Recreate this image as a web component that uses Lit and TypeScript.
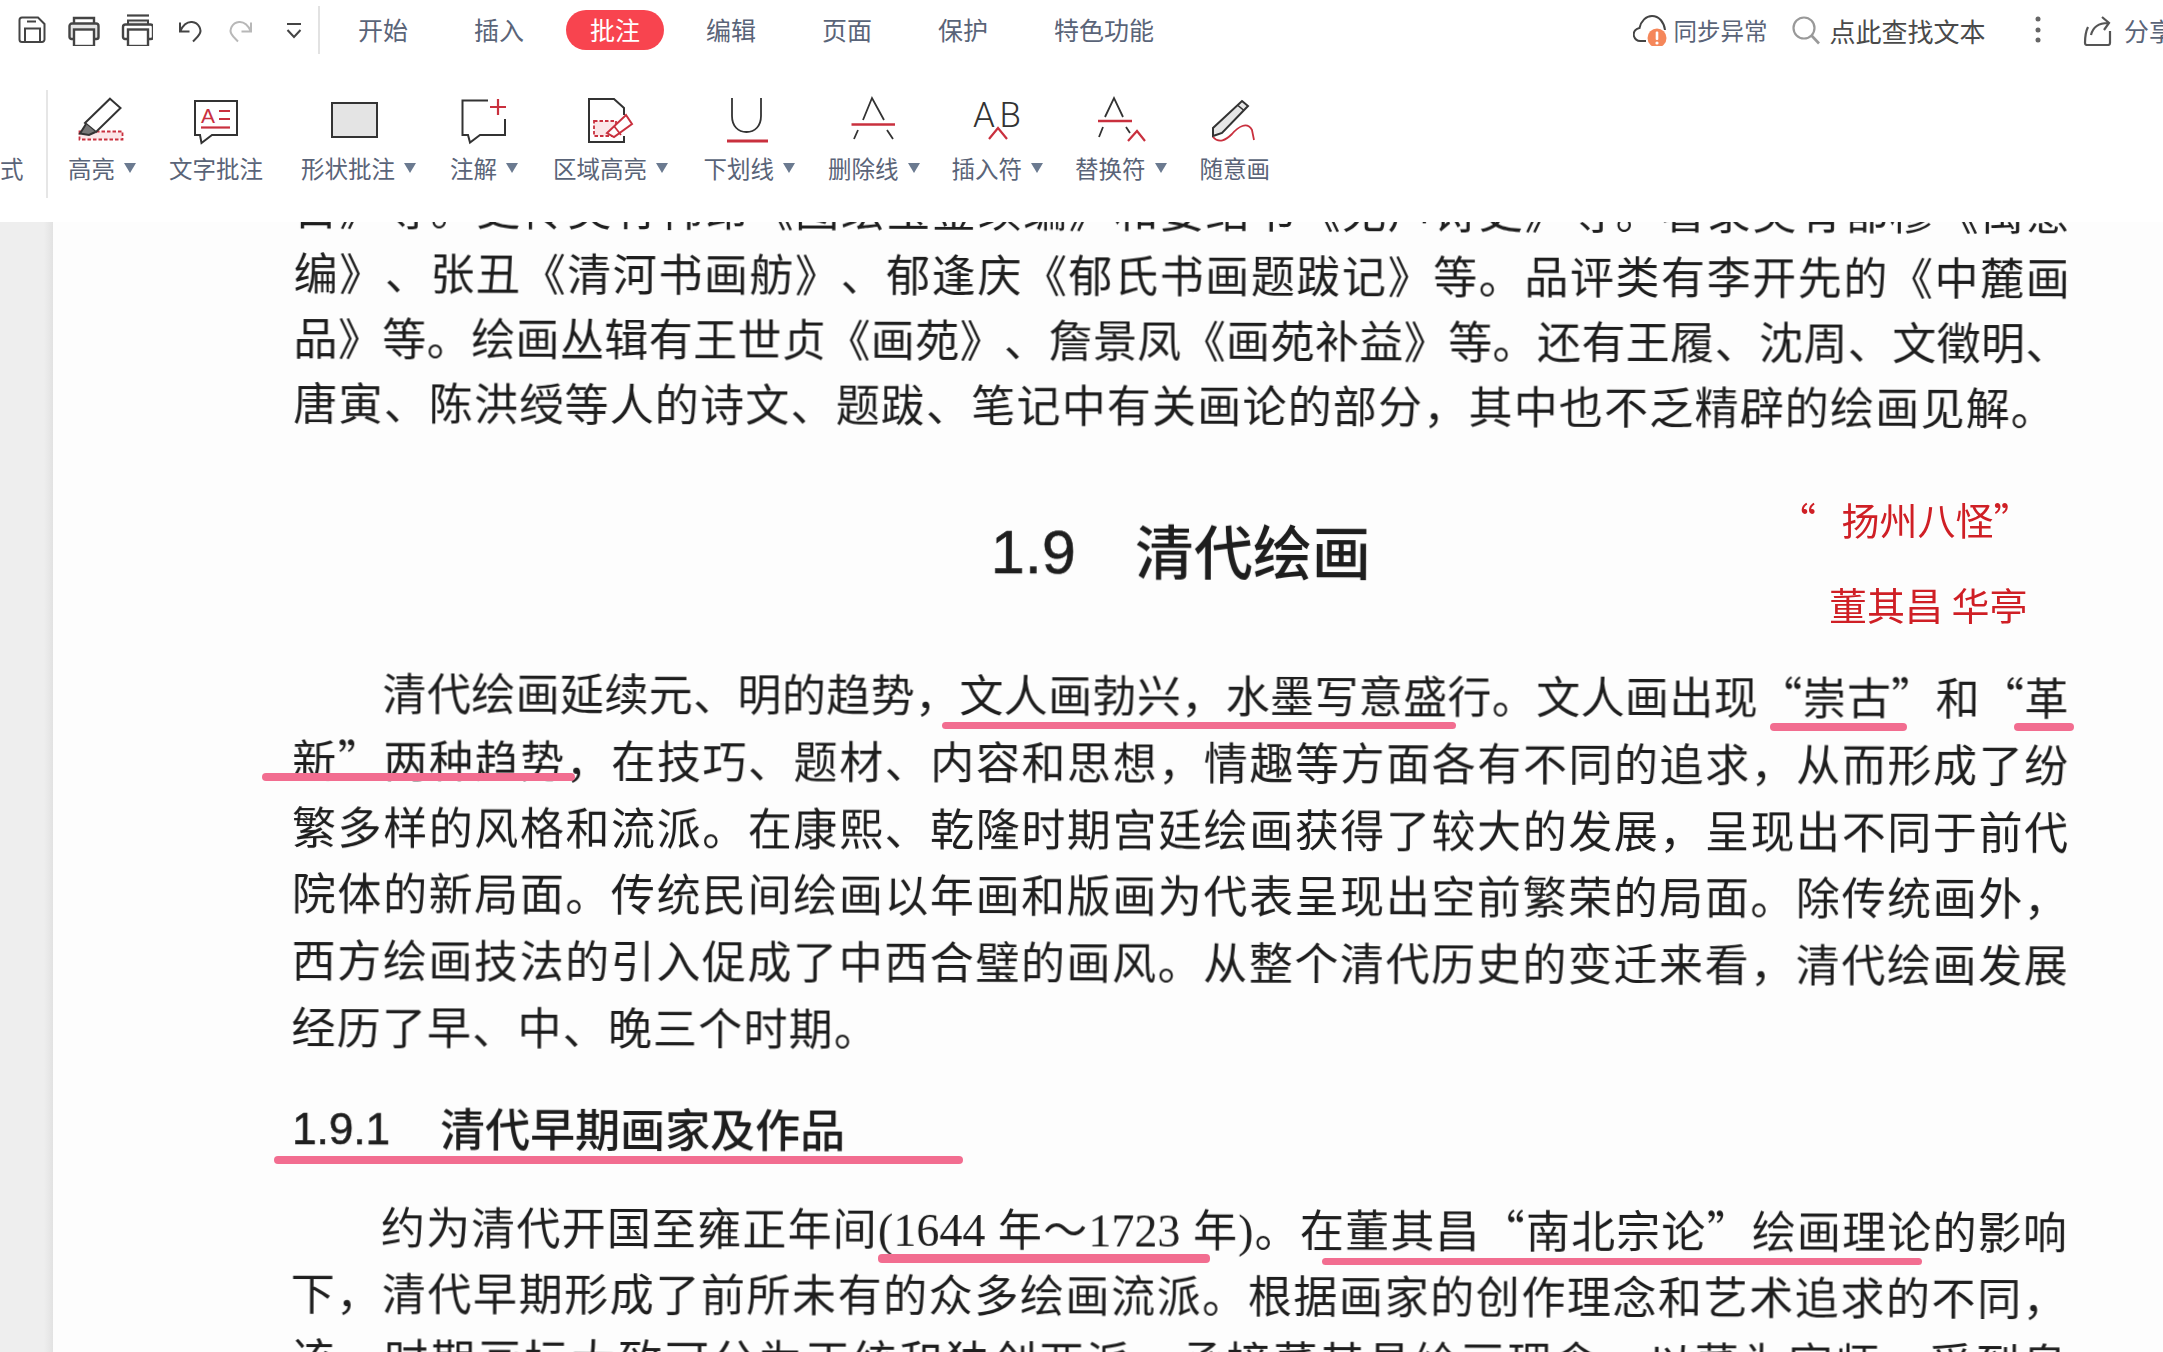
import { LitElement, html, css, svg } from "lit";
import { customElement } from "lit/decorators.js";

const D = "#444";
const R = "#c9303e";

const topIcons = [
  svg`<path d="M6 3.5H22L28.5 10V25.5a2.5 2.5 0 0 1-2.5 2.5H6a2.5 2.5 0 0 1-2.5-2.5V6A2.5 2.5 0 0 1 6 3.5Z" fill="none" stroke="${D}" stroke-width="2"/><path d="M9 28V14.5H24V28M11 7.5H20" fill="none" stroke="${D}" stroke-width="2"/>`,
  svg`<path d="M6 9.5V4H26V9.5" fill="none" stroke="${D}" stroke-width="2.4"/><path d="M6 25H3.5a2 2 0 0 1-2-2V12a2.5 2.5 0 0 1 2.5-2.5H28a2.5 2.5 0 0 1 2.5 2.5V23a2 2 0 0 1-2 2H26" fill="#e4e4e4" stroke="${D}" stroke-width="2.4"/><rect x="6" y="15.5" width="20" height="16.5" fill="#fff" stroke="${D}" stroke-width="2.4"/>`,
  svg`<path d="M6 1.5H28" stroke="${D}" stroke-width="2.2"/><path d="M7 11V6.5H27V11" fill="#e4e4e4" stroke="${D}" stroke-width="2"/><path d="M7 25H4a2 2 0 0 1-2-2V13a2.5 2.5 0 0 1 2.5-2.5H29.5a2.5 2.5 0 0 1 2.5 2.5V23a2 2 0 0 1-2 2H27" fill="none" stroke="${D}" stroke-width="2.4"/><rect x="7" y="15.5" width="20" height="16.5" fill="#fff" stroke="${D}" stroke-width="2.4"/>`,
  svg`<path d="M7 8.5V17.5H16.5M7 17.5C10 11 14 7.5 19 8C26 8.7 29 16 26.5 20C25 23 22 25.5 20 27.5" fill="none" stroke="${D}" stroke-width="2"/>`,
  svg`<path d="M25 8.5V17.5H15.5M25 17.5C22 11 18 7.5 13 8C6 8.7 3 16 5.5 20C7 23 10 25.5 12 27.5" fill="none" stroke="#b8b8b8" stroke-width="2"/>`,
  svg`<path d="M9 10H23" stroke="${D}" stroke-width="2"/><path d="M9.5 16L16 23L22.5 16" fill="none" stroke="${D}" stroke-width="2"/>`,
];

const tabs = ["开始", "插入", "批注", "编辑", "页面", "保护", "特色功能"];

const strokeA = (p: string) =>
  svg`<path d="${p}" fill="none" stroke="#333" stroke-width="1.8"/>`;

const tools = [
  {
    label: "高亮",
    drop: true,
    ml: 0,
    icon: svg`<rect x="1.5" y="35.5" width="43" height="8" fill="#fbe6e8" stroke="${R}" stroke-width="1.8" stroke-dasharray="3.5 2"/><path d="M32 2.7L42.5 12L18 36L7 27Z" fill="#fff" stroke="#333" stroke-width="2"/><path d="M8 28L2 37.5L11 39L17.5 36" fill="#777" stroke="#333" stroke-width="2"/>`,
  },
  {
    label: "文字批注",
    drop: false,
    ml: 0,
    icon: svg`<path d="M3 5H45V39H20L9.5 47L8 39H3Z" fill="#fff" stroke="#333" stroke-width="2"/><text x="9" y="27" class="glyph" fill="${R}" font-size="21">A</text><path d="M27 15H38M27 23H38" stroke="${R}" stroke-width="2"/><path d="M9 31.5H38" stroke="${R}" stroke-width="2.2"/>`,
  },
  {
    label: "形状批注",
    drop: true,
    ml: 5,
    icon: svg`<rect x="-3" y="7" width="45" height="34" fill="#e4e4e4" stroke="#333" stroke-width="2"/>`,
  },
  {
    label: "注解",
    drop: true,
    ml: 1,
    icon: svg`<path d="M28 4.5H2.5V39H8L10 46.5L20 39H45V23" fill="none" stroke="#333" stroke-width="2"/><path d="M38 3V19M30 11H46" stroke="${R}" stroke-width="2.2"/>`,
  },
  {
    label: "区域高亮",
    drop: true,
    ml: 2,
    icon: svg`<path d="M37 19V12L27 3H2V46H37V40" fill="none" stroke="#333" stroke-width="2"/><rect x="7" y="25" width="22" height="15" fill="#fbe6e8" stroke="${R}" stroke-width="1.8" stroke-dasharray="3.5 2"/><path d="M39 19L45 28L27 41L20 37Z" fill="#fff" stroke="${R}" stroke-width="2"/><path d="M27 30L34 39" stroke="${R}" stroke-width="1.8"/>`,
  },
  {
    label: "下划线",
    drop: true,
    ml: 2.5,
    icon: svg`<path d="M7 2V20C7 30 13 36 21.5 36C30 36 36 30 36 20V2" fill="none" stroke="#333" stroke-width="1.8"/><path d="M2 45H43" stroke="${R}" stroke-width="3"/>`,
  },
  {
    label: "删除线",
    drop: true,
    ml: 0,
    icon: svg`${strokeA("M13 24L22 2L34 24M8 34L4 43M37 34L43 43")}<path d="M1.5 28.5H45" stroke="${R}" stroke-width="2.6"/>`,
  },
  {
    label: "插入符",
    drop: true,
    ml: -1,
    icon: svg`<text x="0" y="31" class="glyph thin" fill="#333" font-size="35" textLength="48">AB</text><path d="M16 43L25 32L34 43" fill="none" stroke="${R}" stroke-width="2.2"/>`,
  },
  {
    label: "替换符",
    drop: true,
    ml: -1,
    icon: svg`${strokeA("M8 21L17 2L26 21M6 31L2 41M29 31L33 37")}<path d="M1 25H35" stroke="${R}" stroke-width="2.6"/><path d="M31 45L40 35L48 45" fill="none" stroke="${R}" stroke-width="2.2"/>`,
  },
  {
    label: "随意画",
    drop: false,
    ml: 0,
    icon: svg`<path d="M31 5L37 10L11 37L2 40L2 32Z" fill="#e6e6e6" stroke="#333" stroke-width="2"/><path d="M27 9.5L33 14.5" stroke="#333" stroke-width="1.6"/><path d="M2 41C8 48 15 44 21 38C27 31 36 25 41 34L43 44" fill="none" stroke="${R}" stroke-width="1.8"/>`,
  },
];

const marks = [
  [942, 722, 514, 7],
  [1770, 723, 137, 8],
  [2014, 723, 60, 8],
  [262, 773, 313, 8],
  [274, 1156, 689, 8],
  [878, 1254, 332, 9],
  [1322, 1258, 600, 7],
];

@customElement("app-root")
export class AppRoot extends LitElement {
  static styles = css`
    :host {
      display: block;
      width: 2163px;
      height: 1352px;
      overflow: hidden;
      background: #fff;
      font-family: "Noto Sans CJK SC", "Liberation Sans", sans-serif;
    }
    .toolbar { height: 222px; background: #fff; }
    .row1 { display: flex; align-items: center; height: 60px; padding-left: 16px; }
    .qa { display: flex; gap: 20.4px; }
    .qa svg { display: block; width: 32px; height: 32px; }
    .vsep { width: 2px; height: 48px; background: #e2e2e2; margin: 0 14px 0 8px; }
    .tabs { display: flex; gap: 18px; }
    .tab {
      height: 40px; padding: 0 24px; line-height: 38px; border-radius: 20px;
      font-size: 25px; color: #5a6478; white-space: nowrap;
    }
    .tab.on { background: #f8444f; color: #fff; }
    .right { display: flex; align-items: center; margin-left: auto; margin-right: -11px; }
    .right svg { display: block; }
    .sync { font-size: 23.5px; color: #5a6478; margin: 0 24px 0 6px; white-space: nowrap; }
    .find { font-size: 26px; color: #4a4a4a; margin: 0 48px 0 8px; white-space: nowrap; }
    .share { font-size: 25px; color: #5a6478; margin-left: 12px; white-space: nowrap; }
    .dots { margin-right: 38.5px; }

    .row2 { display: flex; align-items: flex-start; height: 162px; }
    .cut {
      width: 46px; flex: none; padding-top: 91px; line-height: 34px; font-size: 23.5px;
      color: #5a6478; white-space: nowrap;
    }
    .hsep { width: 2px; height: 108px; margin-top: 30px; background: #e6e6e6; flex: none; }
    .tools { display: flex; gap: 33px; margin-left: 20px; padding-top: 36px; }
    .tool { display: flex; flex-direction: column; align-items: center; }
    .tool svg.ic { display: block; width: 48px; height: 48px; overflow: visible; }
    .glyph { font-family: "Liberation Sans", sans-serif; font-weight: 400; }
    .glyph.thin { font-family: Roboto, sans-serif; font-weight: 300; }
    .lab {
      display: flex; align-items: center; height: 34px; margin-top: 7px;
      font-size: 23.5px; color: #5a6478; white-space: nowrap;
    }
    .arrow {
      width: 0; height: 0; margin-left: 9px;
      border-left: 6px solid transparent; border-right: 6px solid transparent;
      border-top: 10px solid #6b7a90;
    }

    .body { display: flex; height: 1130px; overflow: hidden; }
    .gutter { width: 53px; flex: none; background: linear-gradient(90deg, #eeeeee 0, #eeeeee 44px, #e2e2e2 100%); }
    .page { position: relative; flex: 1; background: #fdfdfd; overflow: hidden; padding-left: 241px; }
    .text {
      width: 1776px; margin-top: -48.5px; transform: rotate(0.17deg); transform-origin: 0 0;
      color: #1e1e1e; font-size: 44px; filter: blur(0.35px);
      text-spacing-trim: space-all;
    }
    .l { text-align: justify; text-align-last: justify; }
    .l.end { text-align-last: left; letter-spacing: 1.2px; }
    .l.ind { text-indent: 90px; }
    .a .l { height: 65px; line-height: 65px; }
    .b .l { height: 66.8px; line-height: 66.8px; }
    .c .l { height: 66px; line-height: 66px; }
    .b { margin-top: 61.5px; }
    .c { margin-top: 35px; }
    .num { font-family: "Liberation Serif", serif; font-size: 46px; }
    .h2 {
      display: flex; justify-content: center; align-items: center; gap: 59px;
      height: 100px; margin-top: 62.5px; font-size: 59px; font-weight: 500;
    }
    .h3 {
      display: flex; align-items: center; gap: 50px; height: 60px; margin-top: 38px;
      padding-left: 1px; font-size: 45px; font-weight: 500;
    }
    .lat { font-family: "Liberation Sans", sans-serif; font-weight: 400; -webkit-text-stroke: 0.6px #1e1e1e; }
    .h2 .lat { font-size: 61px; margin-top: 6px; }
    .h3 .lat { font-size: 44px; margin-top: 4px; }
    .mark { position: absolute; background: #f26d90; border-radius: 4px; }
    .note {
      position: absolute; color: #cf1f25; font-size: 38px; line-height: 50px;
      white-space: pre; filter: blur(0.3px);
    }
  `;

  render() {
    return html`
      <div class="toolbar">
        <div class="row1">
          <div class="qa">
            ${topIcons.map((i) => html`<svg viewBox="0 0 32 32">${i}</svg>`)}
          </div>
          <div class="vsep"></div>
          <div class="tabs">
            ${tabs.map((t) => html`<div class="tab ${t === "批注" ? "on" : ""}">${t}</div>`)}
          </div>
          <div class="right">
            <svg width="34" height="32" viewBox="0 0 34 32">
              <path d="M13 27H8A6.5 6.5 0 0 1 6.5 14C8 7 13 2 19 2C26 2 31 8 32 16" fill="none" stroke="#444" stroke-width="2"/>
              <circle cx="24" cy="24" r="9.5" fill="#f5875a"/>
              <rect x="22.7" y="17.5" width="2.6" height="8.5" rx="1" fill="#fff"/>
              <circle cx="24" cy="29" r="1.6" fill="#fff"/>
            </svg>
            <span class="sync">同步异常</span>
            <svg width="30" height="30" viewBox="0 0 30 30">
              <circle cx="13" cy="13" r="10.5" fill="none" stroke="#999" stroke-width="2.2"/>
              <path d="M20.5 20.5L28 28.5" stroke="#999" stroke-width="2.6"/>
            </svg>
            <span class="find">点此查找文本</span>
            <svg class="dots" width="10" height="30" viewBox="0 0 10 30">
              <circle cx="5" cy="4" r="2.5" fill="#666"/><circle cx="5" cy="15" r="2.5" fill="#666"/><circle cx="5" cy="25" r="2.5" fill="#666"/>
            </svg>
            <svg width="30" height="32" viewBox="0 0 30 32">
              <path d="M6 13C4 17 3 21 3 29C3 30 4 31 5 31H26C27 31 28 30 28 29V17" fill="none" stroke="#555" stroke-width="2.2"/>
              <path d="M9 21C11 13 17 9 26 9M20 3L27 9L22 16" fill="none" stroke="#555" stroke-width="2.2"/>
            </svg>
            <span class="share">分享</span>
          </div>
        </div>
        <div class="row2">
          <div class="cut">式</div>
          <div class="hsep"></div>
          <div class="tools">
            ${tools.map(
              (t) => html`<div class="tool" style="margin-left:${t.ml}px">
                <svg class="ic" viewBox="0 0 48 48">${t.icon}</svg>
                <div class="lab">${t.label}${t.drop ? html`<i class="arrow"></i>` : ""}</div>
              </div>`
            )}
          </div>
        </div>
      </div>
      <div class="body">
        <div class="gutter"></div>
        <div class="page">
          <div class="text" lang="zh-CN">
            <div class="a">
              <div class="l">目》等。更传类有韩昂《图绘宝鉴续编》和姜绍书《无声诗史》等。著录类有都穆《寓意</div>
              <div class="l">编》、张丑《清河书画舫》、郁逢庆《郁氏书画题跋记》等。品评类有李开先的《中麓画</div>
              <div class="l">品》等。绘画丛辑有王世贞《画苑》、詹景凤《画苑补益》等。还有王履、沈周、文徵明、</div>
              <div class="l end">唐寅、陈洪绶等人的诗文、题跋、笔记中有关画论的部分&#xFF0C;其中也不乏精辟的绘画见解。</div>
            </div>
            <div class="h2"><span class="lat">1.9</span><span>清代绘画</span></div>
            <div class="b">
              <div class="l ind">清代绘画延续元、明的趋势&#xFF0C;文人画勃兴&#xFF0C;水墨写意盛行。文人画出现“崇古”和“革</div>
              <div class="l">新”两种趋势&#xFF0C;在技巧、题材、内容和思想&#xFF0C;情趣等方面各有不同的追求&#xFF0C;从而形成了纷</div>
              <div class="l">繁多样的风格和流派。在康熙、乾隆时期宫廷绘画获得了较大的发展&#xFF0C;呈现出不同于前代</div>
              <div class="l">院体的新局面。传统民间绘画以年画和版画为代表呈现出空前繁荣的局面。除传统画外&#xFF0C;</div>
              <div class="l">西方绘画技法的引入促成了中西合璧的画风。从整个清代历史的变迁来看&#xFF0C;清代绘画发展</div>
              <div class="l end">经历了早、中、晚三个时期。</div>
            </div>
            <div class="h3"><span class="lat">1.9.1</span><span>清代早期画家及作品</span></div>
            <div class="c">
              <div class="l ind">约为清代开国至雍正年间<span class="num">(1644 </span>年&#xFF5E;<span class="num">1723 </span>年<span class="num">)</span>。在董其昌“南北宗论”绘画理论的影响</div>
              <div class="l">下&#xFF0C;清代早期形成了前所未有的众多绘画流派。根据画家的创作理念和艺术追求的不同&#xFF0C;</div>
              <div class="l">该一时期画坛大致可分为正统和独创两派。承接董其昌绘画理念&#xFF0C;以董为宗师&#xFF0C;受到皇</div>
            </div>
          </div>
          ${marks.map(
            ([x, y, w, h]) =>
              html`<div class="mark" style="left:${x - 53}px;top:${y - 222}px;width:${w}px;height:${h}px"></div>`
          )}
          <div class="note" style="left:${1778 - 53}px;top:${494 - 222}px">“   扬州八怪”</div>
          <div class="note" style="left:${1829 - 53}px;top:${579 - 222}px">董其昌 华亭</div>
        </div>
      </div>
    `;
  }
}
